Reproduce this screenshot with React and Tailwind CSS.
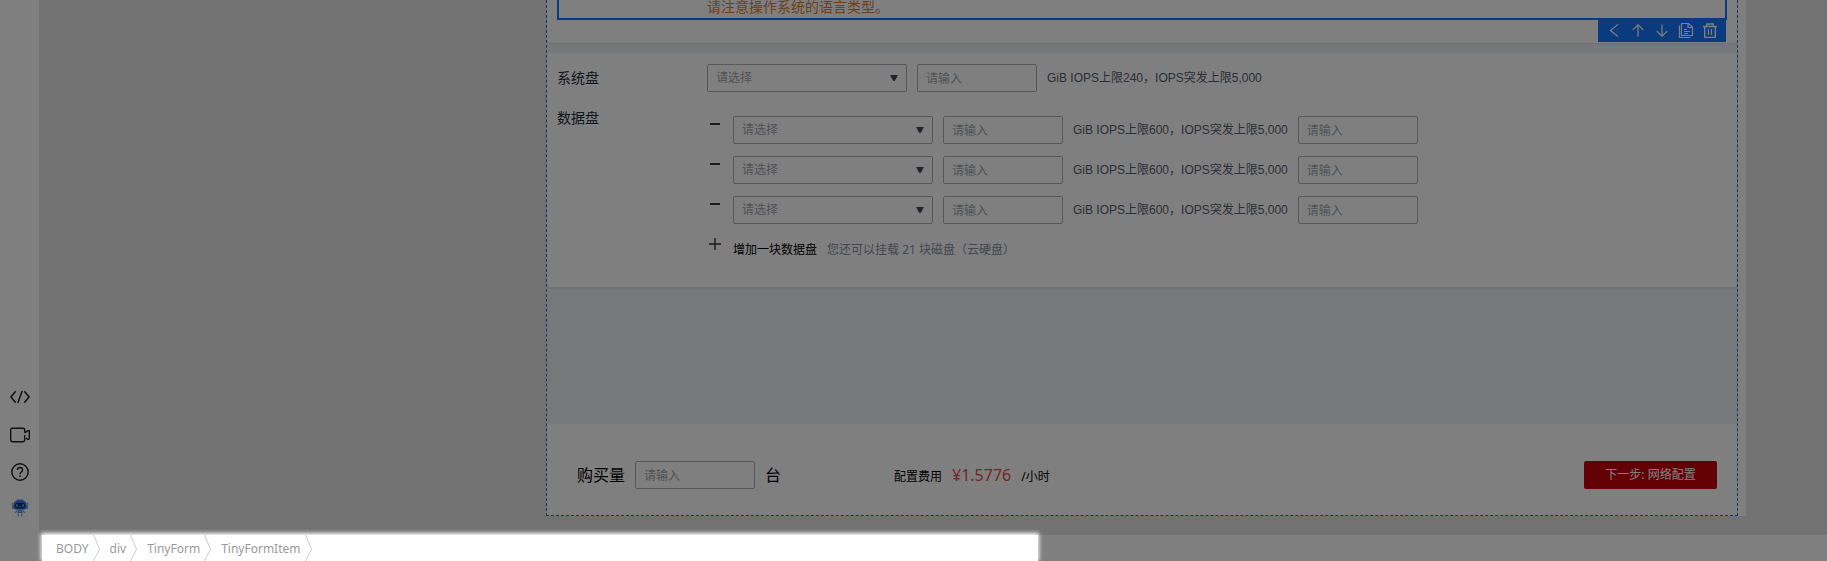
import React from "react";

const FIELD = "h-7 w-[120px] rounded-[2px] border border-[#aeb0b5] bg-transparent px-2 text-xs text-[#575d6c] placeholder:text-[#a2a4a9] outline-none";

function Field({ label }) {
  return <input type="text" aria-label={label} placeholder="请输入" className={FIELD} />;
}

function Picker({ label }) {
  return (
    <div className="relative">
      <select
        aria-label={label}
        className="block h-7 w-[200px] appearance-none rounded-[2px] border border-[#aeb0b5] bg-transparent px-2 text-xs text-[#a2a4a9] outline-none"
      >
        <option>请选择</option>
      </select>
      <svg viewBox="0 0 8 6" className="pointer-events-none absolute top-[11px] right-[9px] h-1.5 w-2" aria-hidden="true">
        <path d="M0 0h8L5 5.4Q4 6.6 3 5.4Z" fill="#474b58" />
      </svg>
    </div>
  );
}

function Limits({ cap }) {
  return (
    <span className="font-['Liberation_Sans','Noto_Sans_CJK_SC',sans-serif] text-xs whitespace-nowrap text-[#575d6c]">
      GiB IOPS上限{cap}，IOPS突发上限5,000
    </span>
  );
}

function ToolIcon({ label, children }) {
  return (
    <button type="button" aria-label={label} className="size-4">
      <svg viewBox="0 0 16 16" className="size-4" fill="none" stroke="white" strokeWidth="1.2">
        {children}
      </svg>
    </button>
  );
}

function Toolbar() {
  return (
    <div className="mr-px flex h-[22px] items-center gap-2 self-end bg-[#1476ff] px-2 pb-0.5">
      <ToolIcon label="选择父级">
        <path d="M12 2.4 4.4 8.5l7.6 6" />
      </ToolIcon>
      <ToolIcon label="上移">
        <path d="M8 14.5V3M2.8 7.9 8 2.8l5.2 5.1" />
      </ToolIcon>
      <ToolIcon label="下移">
        <path d="M8 2.5V14M2.8 9.1 8 14.2l5.2-5.1" />
      </ToolIcon>
      <ToolIcon label="复制">
        <path d="M3.5 1.5h7L14.5 5v8.5h-11Z" />
        <path d="M10 1.5V5.5h4.5" />
        <path d="M1.5 3.5v12h11" />
        <path d="M6 7.5h3M6 9.5h6M6 11.5h4" strokeWidth="1" />
      </ToolIcon>
      <ToolIcon label="删除">
        <path d="M1 4.5h14M4.8 4.5v-2.5h6.4v2.5M2.7 4.5v11h10.6v-11" strokeWidth="1.4" />
        <path d="M6.5 7v6M9.5 7v6" />
      </ToolIcon>
    </div>
  );
}

function DiskRow({ index }) {
  return (
    <div className="flex items-center gap-2.5">
      <button type="button" aria-label={"删除数据盘" + index} className="flex h-7 w-4 items-start justify-center pt-[7px]">
        <svg viewBox="0 0 10 2" className="h-0.5 w-2.5">
          <path d="M0 0h10v2H0z" fill="#3a3a3a" />
        </svg>
      </button>
      <Picker label={"数据盘类型" + index} />
      <Field label={"数据盘容量" + index} />
      <Limits cap="600" />
      <Field label={"数据盘数量" + index} />
    </div>
  );
}

function Robot() {
  return (
    <svg viewBox="0 0 18 18" className="size-[18px]" aria-hidden="true">
      <path d="M6 .5h6l1 2H5z" fill="#4b8cf2" />
      <path d="M1.3 3.5v4M16.7 3.5v4" stroke="#e08a70" strokeWidth="1.1" />
      <path d="M1 6.5h2v3.5H1zM15 6.5h2v3.5h-2z" fill="#65a8f5" />
      <rect x="2.5" y="2" width="13" height="8.8" rx="3.5" fill="#3173e8" />
      <rect x="4" y="4" width="10" height="5.3" rx="2" fill="#102966" />
      <path d="M5.9 5.3v2.7M12.1 5.3v2.7" stroke="#69cfff" strokeWidth="1.3" />
      <path d="m7.8 7.4 1.2.7 1.2-.7" stroke="#66a5fa" fill="none" />
      <path d="M7 11.3h4l.6 2.7H6.4z" fill="#5689d8" />
      <path d="M6 11.6 4.3 13.8M12 11.6l1.7 2.2M7.3 14.5v3M10.7 14.5v3" stroke="#6d9fe0" strokeWidth="1.2" />
      <path d="M8.4 12.2h1.2v1.1H8.4z" fill="#dcecff" />
    </svg>
  );
}

function Sidebar() {
  return (
    <nav aria-label="工具" className="flex w-[39px] shrink-0 flex-col items-center justify-end gap-[18px] bg-white pb-[18px] pl-px">
      <button type="button" aria-label="源码" className="size-5">
        <svg viewBox="0 0 20 20" className="size-5" fill="none" stroke="#222" strokeWidth="1.5">
          <path d="M5.7 4.2.9 10l4.8 5.8M14.3 4.2l4.8 5.8-4.8 5.8M12.2 4 7.8 16" />
        </svg>
      </button>
      <button type="button" aria-label="视频" className="size-5">
        <svg viewBox="0 0 20 20" className="size-5" fill="none" stroke="#222" strokeWidth="1.4">
          <path d="M14.7 7.8V4.8q0-1.6-1.6-1.6H2.3Q.7 3.2.7 4.8V15q0 1.7 1.6 1.7h10.8q1.6 0 1.6-1.7v-5" />
          <path d="M14.7 7.8 18 5.7q1.3-.4 1.3.8v7q0 1.2-1.3.8l-2-1.2" />
        </svg>
      </button>
      <button type="button" aria-label="帮助" className="size-[18px]">
        <svg viewBox="0 0 18 18" className="size-[18px]" fill="none" stroke="#222" strokeWidth="1.4">
          <circle cx="9" cy="9" r="8.2" />
          <path d="M6.4 7q0-2.5 2.6-2.5T11.6 7q0 1.2-1.3 2Q9 9.8 9 11.2M9 12.6v1.4" />
        </svg>
      </button>
      <button type="button" aria-label="智能助手" className="size-[18px]">
        <Robot />
      </button>
    </nav>
  );
}

function Artboard() {
  return (
    <div className="mr-[81px] mb-[19px] ml-auto flex w-[1200px] bg-white pr-2">
      <div className="flex flex-1 flex-col border-x border-b border-dashed border-[#2070e8] bg-[#eef0f5]">
        <section className="flex flex-col rounded-b-[3px] bg-white px-2.5 pb-px shadow-[0_1px_2px_rgba(0,0,0,0.08)]">
          <p className="border-x-2 border-b-2 border-[#1476ff] pb-1 pl-[148px] text-sm leading-[14px] text-[#e37d29]">
            请注意操作系统的语言类型。
          </p>
          <Toolbar />
        </section>

        <section className="mt-2.5 rounded-[3px] bg-white px-2.5 pt-[11px] pb-[23px] shadow-[0_1px_2px_rgba(0,0,0,0.08)]">
          <div className="flex items-center">
            <span className="w-[150px] text-sm text-[#252b3a]">系统盘</span>
            <div className="flex items-center gap-2.5">
              <Picker label="系统盘类型" />
              <Field label="系统盘容量" />
              <Limits cap="240" />
            </div>
          </div>
          <div className="mt-4 flex items-start">
            <span className="w-[150px] text-sm text-[#252b3a]">数据盘</span>
            <div className="flex flex-col gap-3 pt-2">
              <DiskRow index={1} />
              <DiskRow index={2} />
              <DiskRow index={3} />
              <div className="flex h-7 items-center gap-2.5 text-xs">
                <button type="button" className="flex h-7 items-center gap-3 pl-0.5">
                  <svg viewBox="0 0 12 12" className="mb-3 size-3" stroke="#333" strokeWidth="1.4">
                    <path d="M6 0v12M0 6h12" />
                  </svg>
                  增加一块数据盘
                </button>
                <span className="text-[#8a8e99]">您还可以挂载 21 块磁盘（云硬盘）</span>
              </div>
            </div>
          </div>
        </section>

        <div className="min-h-[137px] flex-1" />

        <section className="flex items-center bg-white pt-[37px] pr-5 pb-[26px] pl-[30px] text-xs">
          <div className="flex h-7 w-[317px] items-center gap-2.5 text-base leading-7">
            <label htmlFor="amount">购买量</label>
            <input id="amount" type="text" placeholder="请输入" className={FIELD} />
            <span>台</span>
          </div>
          <div className="flex h-7 flex-1 items-baseline gap-2.5 leading-7">
            <span>配置费用</span>
            <span className="text-base leading-7 text-[#de504e]">¥1.5776</span>
            <span>/小时</span>
          </div>
          <button type="button" className="h-7 w-[133px] rounded-[2px] bg-[#c7000b] text-white">
            下一步: 网络配置
          </button>
        </section>
      </div>
    </div>
  );
}

function Crumbs() {
  return (
    <nav
      aria-label="节点路径"
      className="relative z-20 ml-[42px] flex h-[26px] w-[996px] bg-white pl-3.5 text-xs text-[#999] shadow-[0_-1px_4px_1px_white]"
    >
      {["BODY", "div", "TinyForm", "TinyFormItem"].map((name) => (
        <span key={name} className="mr-2.5 flex">
          <a href="#" className="mr-1 leading-7">{name}</a>
          <svg viewBox="0 0 7 26" className="h-[26px] w-[7px]" fill="none" stroke="#ccc" aria-hidden="true">
            <path d="M.5 0 6.5 14 .5 26" />
          </svg>
        </span>
      ))}
    </nav>
  );
}

export default function App() {
  return (
    <div className="relative flex min-h-screen flex-col overflow-hidden bg-white font-['Noto_Sans','Noto_Sans_CJK_SC',sans-serif] text-black">
      <div className="flex flex-1">
        <Sidebar />
        <main className="flex flex-1 bg-[#e4e4e4]">
          <Artboard />
        </main>
      </div>
      <Crumbs />
      <div className="pointer-events-none absolute inset-0 z-10 bg-black/50" />
    </div>
  );
}
